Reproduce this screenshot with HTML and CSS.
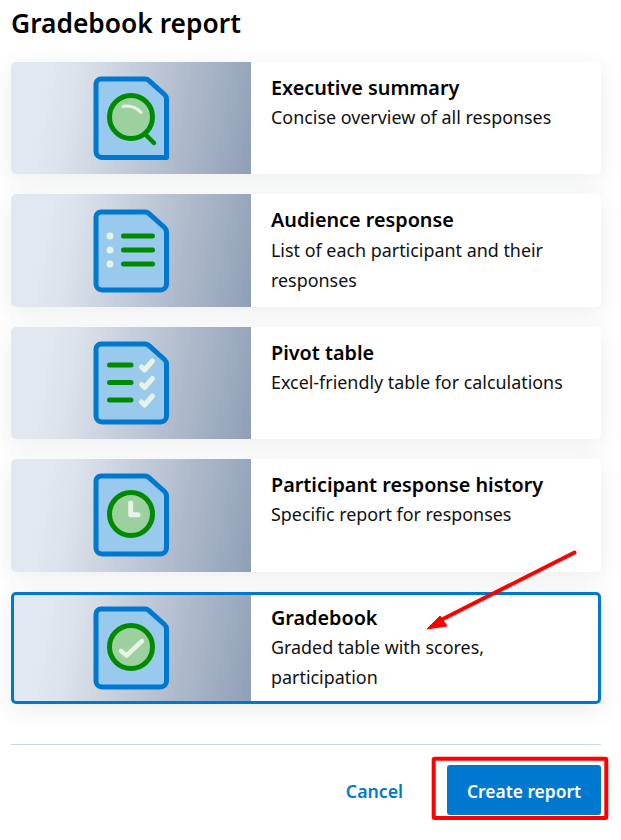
FILE: index.html
```html
<!DOCTYPE html>
<html lang="en">
<head>
<meta charset="utf-8">
<title>Gradebook report</title>
<link rel="stylesheet" href="styles.css">
</head>
<body>
<svg width="0" height="0" class="defs"><defs>
<g id="doc"><path d="M8 3H52a6 6 0 0 1 4 1.600L71.500 18.500a6 6 0 0 1 2 4.500V75a6 6 0 0 1-6 6H9a6 6 0 0 1-6-6V8a5 5 0 0 1 5-5Z" fill="#99c9ec" stroke="#0078cf" stroke-width="5" stroke-linejoin="round"/></g>
</defs></svg>
<main class="page">
<h1 class="title">Gradebook report</h1>
<div class="cards">
<article class="card">
<div class="thumb"><svg class="icon" viewBox="0 0 76 84"><path d="M8 3H52a6 6 0 0 1 4 1.600L71.500 18.500a6 6 0 0 1 2 4.500V81.500H9a6 6 0 0 1-6-6V8a5 5 0 0 1 5-5Z" fill="#99c9ec" stroke="#0078cf" stroke-width="5" stroke-linejoin="round"/><circle cx="38" cy="41" r="21.500" fill="#9dd09f" stroke="#008a00" stroke-width="5"/><path d="M52 58l9 9" stroke="#008a00" stroke-width="4.500" stroke-linecap="round"/><path d="M30 30.500c5-1.500 14 .5 18 6" fill="none" stroke="#e8f2e6" stroke-width="3" stroke-linecap="round"/></svg></div>
<div class="body"><h2 class="name">Executive summary</h2><p class="desc">Concise overview of all responses</p></div>
</article>
<article class="card">
<div class="thumb"><svg class="icon" viewBox="0 0 76 84"><use href="#doc"/><g fill="#e8f2e6"><circle cx="17" cy="27" r="3.500"/><circle cx="17" cy="41" r="3.500"/><circle cx="17" cy="55" r="3.500"/></g><path d="M30.500 27H59.500M30.500 41H59.500M30.500 55H59.500" stroke="#008a00" stroke-width="5" stroke-linecap="round"/></svg></div>
<div class="body"><h2 class="name">Audience response</h2><p class="desc">List of each participant and their responses</p></div>
</article>
<article class="card">
<div class="thumb"><svg class="icon" viewBox="0 0 76 84"><use href="#doc"/><path d="M16.500 24H38M16.500 41.500H38M16.500 59H38" stroke="#008a00" stroke-width="5" stroke-linecap="round"/><path d="M48.500 26l3 3 8-9M48.500 43.500l3 3 8-9M48.500 61l3 3 8-9" fill="none" stroke="#e8f2e6" stroke-width="5" stroke-linecap="round" stroke-linejoin="round"/></svg></div>
<div class="body"><h2 class="name">Pivot table</h2><p class="desc">Excel-friendly table for calculations</p></div>
</article>
<article class="card">
<div class="thumb"><svg class="icon" viewBox="0 0 76 84"><use href="#doc"/><circle cx="38" cy="41" r="21.500" fill="#9dd09f" stroke="#008a00" stroke-width="5"/><path d="M37.700 30V41.700H45" fill="none" stroke="#e8f2e6" stroke-width="5" stroke-linecap="round" stroke-linejoin="round"/></svg></div>
<div class="body"><h2 class="name">Participant response history</h2><p class="desc">Specific report for responses</p></div>
</article>
<article class="card selected">
<div class="thumb"><svg class="icon" viewBox="0 0 76 84"><use href="#doc"/><circle cx="38" cy="41" r="21.500" fill="#9dd09f" stroke="#008a00" stroke-width="5"/><path d="M28 45l5.500 4.500L49 35" fill="none" stroke="#e8f2e6" stroke-width="4.500" stroke-linecap="round" stroke-linejoin="round"/></svg></div>
<div class="body"><h2 class="name">Gradebook</h2><p class="desc">Graded table with scores, participation</p></div>
</article>
</div>
<hr class="rule">
<footer class="actions">
<button class="cancel" type="button">Cancel</button>
<button class="create" type="button">Create report</button>
</footer>
</main>
<svg class="annot" viewBox="0 0 621 840" aria-hidden="true">
<path d="M574.500 552.500L441 620" stroke="#f00" stroke-width="4" stroke-linecap="round"/>
<path d="M427 629L440 616L447 626Z" fill="#f00" stroke="#f00" stroke-width="1"/>
<rect x="433.700" y="758.700" width="172.600" height="59.300" rx="1" fill="none" stroke="#f00" stroke-width="4"/>
</svg>
</body>
</html>
```
FILE: styles.css
```css
* { box-sizing: border-box; }
html, body { margin: 0; height: 840px; overflow: hidden; background: #fff; }
body { position: relative; font-family: "Noto Sans", sans-serif; color: #000; }
.defs { position: absolute; }
.page { padding: 5px 20px 0 11px; }
.title { margin: 0; font-size: 26.350px; line-height: 36px; font-weight: 600; height: 57px; }
.cards { display: flex; flex-direction: column; gap: 20px; }
.card { display: flex; height: 112.400px; background: #fff; border-radius: 5px; overflow: hidden; box-shadow: 0 6px 24px rgba(40, 50, 70, .09); }
.thumb { flex: 0 0 240px; display: flex; align-items: center; justify-content: center; background: linear-gradient(100deg, #e1e8f0 15%, #dde3ec 25%, #8f9fb6 100%); }
.icon { width: 76px; height: 84px; display: block; }
.body { padding: 11px 20px 0; flex: 1; min-width: 0; }
.name { margin: 0; font-size: 19.800px; line-height: 29.300px; font-weight: 600; }
.desc { margin: 0; font-size: 17.900px; line-height: 30px; font-weight: 400; color: #111; }
.selected { outline: 3px solid #0078cf; outline-offset: -3px; position: relative; }
.rule { margin: 40px 0 0; border: 0; border-top: 1px solid #c8d6e4; }
.actions { display: flex; justify-content: flex-end; align-items: center; gap: 44px; margin-top: 20px; }
.cancel { border: 0; background: none; padding: 2px 0 0; font: 600 17.700px "Noto Sans", sans-serif; color: #0078cf; }
.create { width: 154px; height: 50px; border: 0; border-radius: 3px; background: #0078cf; color: #fff; padding: 2px 0 0; font: 600 17.400px "Noto Sans", sans-serif; }
.annot { position: absolute; left: 0; top: 0; width: 621px; height: 840px; pointer-events: none; }
```
